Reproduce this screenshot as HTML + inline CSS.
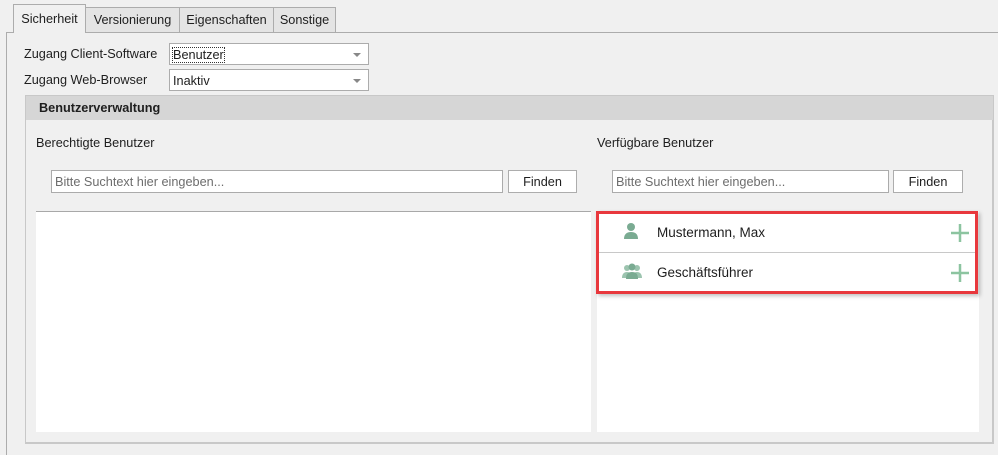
<!DOCTYPE html>
<html><head><meta charset="utf-8"><style>
*{box-sizing:border-box;margin:0;padding:0}
body{width:998px;height:455px;background:#f0f0f0;font-family:"Liberation Sans",sans-serif;font-size:12.7px;color:#1e1e1e;position:relative;overflow:hidden}
.a{position:absolute}
.tab{position:absolute;top:7px;height:25px;border:1px solid #acacac;border-bottom:none;background:#e4e4e4;padding:5px 0 0;text-align:center}
.inp{position:absolute;background:#fff;border:1px solid #ababab;height:23px;padding:4px 3px;color:#6d6d6d}
.btn{position:absolute;background:#fff;border:1px solid #adadad;height:23px;text-align:center;padding-top:4px}
.dd{position:absolute;background:#fff;border:1px solid #acacac;height:22px;padding:4px 3px}
.arr{position:absolute;right:7px;top:9px;border-left:4px solid transparent;border-right:4px solid transparent;border-top:4px solid #888}
</style></head><body>
<div class="a" style="left:6px;top:32px;width:992px;height:423px;border-left:1px solid #acacac;border-top:1px solid #acacac"></div>
<div class="tab" style="left:13px;top:4px;width:73px;height:29px;background:#f0f0f0;z-index:2;padding-top:7px">Sicherheit</div>
<div class="tab" style="left:85px;width:95px">Versionierung</div>
<div class="tab" style="left:179px;width:95px">Eigenschaften</div>
<div class="tab" style="left:273px;width:63px">Sonstige</div>
<div class="a" style="left:24px;top:47px">Zugang Client-Software</div>
<div class="a" style="left:24px;top:73px">Zugang Web-Browser</div>
<div class="dd" style="left:169px;top:43px;width:200px"><span style="outline:1px dotted #333">Benutzer</span><div class="arr"></div></div>
<div class="dd" style="left:169px;top:69px;width:200px">Inaktiv<div class="arr"></div></div>
<div class="a" style="left:25px;top:95px;width:969px;height:349px;border:1px solid #c8c8c8;border-bottom:2px solid #c8c8c8;border-right:2px solid #c8c8c8"></div>
<div class="a" style="left:26px;top:96px;width:967px;height:24px;background:#d6d6d6;font-weight:bold;padding:5px 0 0 13px">Benutzerverwaltung</div>
<div class="a" style="left:36px;top:136px">Berechtigte Benutzer</div>
<div class="a" style="left:597px;top:136px">Verfügbare Benutzer</div>
<div class="inp" style="left:51px;top:170px;width:452px">Bitte Suchtext hier eingeben...</div>
<div class="btn" style="left:508px;top:170px;width:69px">Finden</div>
<div class="inp" style="left:612px;top:170px;width:277px">Bitte Suchtext hier eingeben...</div>
<div class="btn" style="left:893px;top:170px;width:70px">Finden</div>
<div class="a" style="left:36px;top:211px;width:555px;height:221px;background:#fff;border-top:1px solid #a8a8a8"></div>
<div class="a" style="left:597px;top:211px;width:382px;height:221px;background:#fff"></div>
<div class="a" style="left:596px;top:211px;width:382px;height:83px;border:3px solid #e8383d;box-shadow:2px 2px 4px rgba(0,0,0,.25)"></div>
<div class="a" style="left:599px;top:252px;width:376px;height:1px;background:#c8c8c8"></div>
<svg class="a" style="left:622px;top:222px" width="18" height="18" viewBox="0 0 18 18"><circle cx="9" cy="5" r="4" fill="#7aab92"/><path d="M2 17c0-5 3-7 7-7s7 2 7 7z" fill="#7aab92"/></svg>
<svg class="a" style="left:621px;top:262px" width="22" height="18" viewBox="0 0 22 18"><circle cx="6" cy="6" r="3" fill="#9cc4af"/><circle cx="16" cy="6" r="3" fill="#9cc4af"/><circle cx="11" cy="5" r="3.5" fill="#7aab92"/><path d="M1 16c0-4 2-6 5-6s4 2 4 6zM12 16c0-4 1-6 4-6s5 2 5 6z" fill="#9cc4af"/><path d="M5 17c0-5 2-7 6-7s6 2 6 7z" fill="#7aab92"/></svg>
<div class="a" style="left:657px;top:225px;font-size:13.5px">Mustermann, Max</div>
<div class="a" style="left:657px;top:265px;font-size:13.5px">Geschäftsführer</div>
<svg class="a" style="left:950px;top:223px" width="20" height="20"><path d="M10 1v18M1 10h18" stroke="#8cc4a0" stroke-width="2.5"/></svg>
<svg class="a" style="left:950px;top:263px" width="20" height="20"><path d="M10 1v18M1 10h18" stroke="#8cc4a0" stroke-width="2.5"/></svg>
</body></html>
